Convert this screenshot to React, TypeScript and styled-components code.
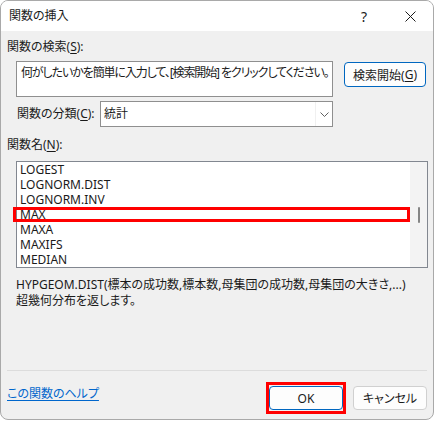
import styled, { createGlobalStyle } from 'styled-components';

const GlobalStyle = createGlobalStyle`
  body {
    margin: 0;
    background: #ffffff;
  }
`

const functions = ['LOGEST', 'LOGNORM.DIST', 'LOGNORM.INV', 'MAX', 'MAXA', 'MAXIFS', 'MEDIAN']
const selectedName = 'MAX'

export default function App() {
  return (
    <>
      <GlobalStyle />
      <Window>
        <TitleBar>
          <Title>関数の挿入</Title>
          <TitleButton>?</TitleButton>
          <TitleButton>
            <svg width="11" height="11" viewBox="0 0 11 11">
              <path d="M0.5 0.5 L10.5 10.5 M10.5 0.5 L0.5 10.5" stroke="#1a1a1a" strokeWidth="1" fill="none" />
            </svg>
          </TitleButton>
        </TitleBar>

        <Body>
          <Label>関数の検索(<u>S</u>):</Label>
          <SearchRow>
            <SearchBox>何がしたいかを簡単に入力して、[検索開始] をクリックしてください。</SearchBox>
            <Button $primary $width={82} $height={25}>検索開始(<u>G</u>)</Button>
          </SearchRow>

          <CategoryRow>
            <CategoryLabel>関数の分類(<u>C</u>):</CategoryLabel>
            <Select>
              <SelectValue>統計</SelectValue>
              <SelectArrow>
                <svg width="9" height="5" viewBox="0 0 9 5">
                  <path d="M0.5 0.5 L4.5 4.5 L8.5 0.5" stroke="#606060" strokeWidth="1" fill="none" />
                </svg>
              </SelectArrow>
            </Select>
          </CategoryRow>

          <NameLabel>関数名(<u>N</u>):</NameLabel>
          <ListBox>
            <Items>
              {functions.map((name) => (
                <Item key={name} $marked={name === selectedName}>{name}</Item>
              ))}
            </Items>
            <ScrollTrack>
              <ScrollThumb />
            </ScrollTrack>
          </ListBox>

          <Description>
            <div>HYPGEOM.DIST(標本の成功数,標本数,母集団の成功数,母集団の大きさ,...)</div>
            <div>超幾何分布を返します。</div>
          </Description>

          <Spacer />
          <Separator />

          <Footer>
            <HelpLink href="#">この関数のヘルプ</HelpLink>
            <Buttons>
              <Button $primary $marked $width={74} $height={24}>OK</Button>
              <Button $width={74} $height={24}>キャンセル</Button>
            </Buttons>
          </Footer>
        </Body>
      </Window>
    </>
  )
}

const Window = styled.div`
  box-sizing: border-box;
  width: 434px;
  height: 420px;
  border: 1px solid #a9a9a9;
  border-radius: 8px;
  overflow: hidden;
  display: flex;
  flex-direction: column;
  background: #f0f0f0;
  font-family: "Noto Sans", "Noto Sans CJK JP", sans-serif;
  font-feature-settings: "palt";
  font-size: 12px;
  color: #1a1a1a;

  u {
    text-decoration-thickness: 1px;
    text-underline-offset: 2px;
  }
`

const TitleBar = styled.div`
  height: 30px;
  display: flex;
  align-items: center;
  background: #ffffff;
  flex-shrink: 0;
`

const Title = styled.div`
  flex: 1;
  padding-left: 8px;
  line-height: 16px;
`

const TitleButton = styled.div`
  width: 46px;
  height: 30px;
  display: flex;
  align-items: center;
  justify-content: center;
  font-size: 14px;
`

const Body = styled.div`
  flex: 1;
  display: flex;
  flex-direction: column;
  padding: 0 6px 9px 6px;
`

const Label = styled.div`
  margin-top: 8px;
  line-height: 16px;
`

const SearchRow = styled.div`
  display: flex;
  align-items: flex-start;
  margin-top: 6px;
  padding-left: 9px;
`

const SearchBox = styled.div`
  box-sizing: border-box;
  width: 317px;
  height: 36px;
  padding: 3px 4px;
  line-height: 16px;
  letter-spacing: -1.1px;
  background: #ffffff;
  border: 1px solid #8f8f8f;
  white-space: nowrap;
  overflow: hidden;
`

const Button = styled.div<{ $primary?: boolean, $marked?: boolean, $width: number, $height: number }>`
  position: relative;
  box-sizing: border-box;
  width: ${p => p.$width}px;
  height: ${p => p.$height}px;
  margin-left: 11px;
  margin-top: 1px;
  display: flex;
  align-items: center;
  justify-content: center;
  background: #fdfdfd;
  border: 1px solid ${p => p.$primary ? '#0067c0' : '#d0d0d0'};
  border-radius: 4px;
  white-space: nowrap;

  &::after {
    content: '';
    display: ${p => p.$marked ? 'block' : 'none'};
    position: absolute;
    inset: -5px -4px -5px -4px;
    border: 3px solid #ff0000;
  }
`

const CategoryRow = styled.div`
  display: flex;
  align-items: center;
  margin-top: 4px;
  padding-left: 10px;
`

const CategoryLabel = styled.div`
  width: 83px;
  line-height: 16px;
`

const Select = styled.div`
  box-sizing: border-box;
  width: 233px;
  height: 26px;
  display: flex;
  background: #ffffff;
  border: 1px solid #8f8f8f;
`

const SelectValue = styled.div`
  flex: 1;
  padding-left: 3px;
  line-height: 24px;
`

const SelectArrow = styled.div`
  width: 16px;
  display: flex;
  align-items: center;
  justify-content: center;
  border-left: 1px solid #f0f0f0;
`

const NameLabel = styled(Label)`
  margin-top: 10px;
`

const ListBox = styled.div`
  box-sizing: border-box;
  width: 412px;
  height: 107px;
  margin-top: 8px;
  margin-left: 9px;
  display: flex;
  background: #ffffff;
  border: 1px solid #828790;
`

const Items = styled.div`
  flex: 1;
  display: flex;
  flex-direction: column;
`

const Item = styled.div<{ $marked?: boolean }>`
  position: relative;
  height: 15px;
  line-height: 15px;
  padding-left: 3px;

  &::after {
    content: '';
    display: ${p => p.$marked ? 'block' : 'none'};
    position: absolute;
    inset: 0 0 0 -4px;
    border: 3px solid #ff0000;
  }
`

const ScrollTrack = styled.div`
  width: 17px;
  background: #f3f3f3;
  display: flex;
  justify-content: center;
  padding-top: 45px;
`

const ScrollThumb = styled.div`
  width: 2px;
  height: 16px;
  background: #858585;
  border-radius: 1px;
`

const Description = styled.div`
  margin-top: 9px;
  margin-left: 9px;
  line-height: 16px;
`

const Spacer = styled.div`
  flex: 1;
`

const Separator = styled.div`
  height: 1px;
  background: #dcdcdc;
`

const Footer = styled.div`
  display: flex;
  align-items: flex-start;
  margin-top: 15px;
`

const HelpLink = styled.a`
  line-height: 16px;
  color: #0066cc;
  text-decoration: underline;
  text-underline-offset: 2px;
`

const Buttons = styled.div`
  margin-left: auto;
  display: flex;
  gap: 10px;

  & > div {
    margin: 0;
  }
`
